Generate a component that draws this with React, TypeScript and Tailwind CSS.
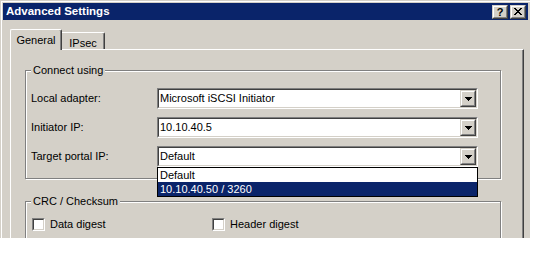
import React from "react";

const raised =
  "border border-t-[#d4d0c8] border-l-[#d4d0c8] border-r-[#404040] border-b-[#404040]";
const raisedInner =
  "border border-t-white border-l-white border-r-[#808080] border-b-[#808080]";
const sunken =
  "border border-t-[#808080] border-l-[#808080] border-r-white border-b-white";
const sunkenInner =
  "border border-t-[#404040] border-l-[#404040] border-r-[#d4d0c8] border-b-[#d4d0c8]";

const CaptionButton = ({ children }: { children: React.ReactNode }) => (
  <div className={`w-[16px] h-[14px] bg-[#d4d0c8] ${raised}`}>
    <div className={`w-full h-full flex items-center justify-center ${raisedInner}`}>
      {children}
    </div>
  </div>
);

const ArrowButton = () => (
  <div className={`w-[16px] h-full bg-[#d4d0c8] ${raised}`}>
    <div className={`w-full h-full flex items-center justify-center ${raisedInner}`}>
      <svg width="7" height="4" viewBox="0 0 7 4" shapeRendering="crispEdges">
        <rect x="0" y="0" width="7" height="1" fill="#000" />
        <rect x="1" y="1" width="5" height="1" fill="#000" />
        <rect x="2" y="2" width="3" height="1" fill="#000" />
        <rect x="3" y="3" width="1" height="1" fill="#000" />
      </svg>
    </div>
  </div>
);

const Combo = ({ value }: { value: string }) => (
  <div className={`w-[321px] h-[21px] ${sunken}`}>
    <div className={`h-full flex bg-white ${sunkenInner}`}>
      <div className="flex-1 pl-px leading-[17px] text-black">{value}</div>
      <ArrowButton />
    </div>
  </div>
);

const Row = ({ label, children }: { label: string; children: React.ReactNode }) => (
  <div className="flex items-center h-[21px]">
    <div className="w-[126px]">{label}</div>
    {children}
  </div>
);

const CheckBox = ({ label, className = "" }: { label: string; className?: string }) => (
  <div className={`flex items-center gap-[5px] ${className}`}>
    <div className={`w-[13px] h-[13px] ${sunken}`}>
      <div className={`w-full h-full bg-white ${sunkenInner}`} />
    </div>
    <span>{label}</span>
  </div>
);

const GroupBox = ({
  title,
  className = "",
  children,
}: {
  title: string;
  className?: string;
  children?: React.ReactNode;
}) => (
  <div
    className={`relative w-[476px] border border-[#808080] shadow-[1px_1px_0_white,inset_1px_1px_0_white] ${className}`}
  >
    <span className="absolute -top-[7px] left-[5px] px-[2px] bg-[#d4d0c8] leading-[13px]">
      {title}
    </span>
    {children}
  </div>
);

export default function App() {
  return (
    <div className="w-[537px] h-[255px] bg-white font-['Liberation_Sans',Arial,sans-serif] text-[11px] leading-[13px] text-black">
      <div className="w-[530px] h-[238px] overflow-hidden bg-[#d4d0c8] pt-px pl-px">
        <div className="h-full border-l border-t border-white pt-px pl-px">
          {/* title bar */}
          <div className="w-[525px] h-[17px] bg-[#0a246a] flex items-center justify-between pl-[3px] pr-[2px]">
            <span className="text-white font-bold text-[11.5px]">Advanced Settings</span>
            <div className="flex gap-[2px]">
              <CaptionButton>
                <span className="font-bold text-[11px] leading-[10px] text-black">?</span>
              </CaptionButton>
              <CaptionButton>
                <svg width="8" height="7" viewBox="0 0 8 7" shapeRendering="crispEdges">
                  <path
                    d="M0 0h2v1h1v1h2V1h1V0h2v1H7v1H6v1H5v1h1v1h1v1h1v1H6V6H5V5H3v1H2v1H0V6h1V5h1V4h1V3H2V2H1V1H0z"
                    fill="#000"
                  />
                </svg>
              </CaptionButton>
            </div>
          </div>

          <div className="pl-[7px]">
            {/* tabs */}
            <div className="flex items-end h-[20px] mt-[9px]">
              <div className="relative z-10 -mb-px w-[52px] h-[21px] bg-[#d4d0c8] border-l border-t border-white border-r border-r-[#404040] rounded-tl-[2px] rounded-tr-[2px] shadow-[inset_-1px_0_0_#808080] pt-[4px] text-center">
                General
              </div>
              <div className="w-[43px] h-[17px] border-t border-white border-r border-r-[#404040] rounded-tr-[2px] shadow-[inset_-1px_0_0_#808080] pt-[4px] text-center">
                IPsec
              </div>
            </div>

            {/* panel */}
            <div className="w-[514px] h-[200px] border-l border-t border-white border-r border-r-[#404040] shadow-[inset_-1px_0_0_#808080] pl-[14px] pt-[20px]">
              <GroupBox title="Connect using" className="h-[109px] pl-[5px] pt-[17px]">
                <div className="flex flex-col gap-[8px]">
                  <Row label="Local adapter:">
                    <Combo value="Microsoft iSCSI Initiator" />
                  </Row>
                  <Row label="Initiator IP:">
                    <Combo value="10.10.40.5" />
                  </Row>
                  <Row label="Target portal IP:">
                    <div className="relative">
                      <Combo value="Default" />
                      <div className="absolute z-20 top-full left-0 w-[321px] border border-black bg-white">
                        <div className="h-[14px] pl-[2px] leading-[14px]">Default</div>
                        <div className="h-[14px] pl-[2px] leading-[14px] bg-[#0a246a] text-white">
                          10.10.40.50 / 3260
                        </div>
                      </div>
                    </div>
                  </Row>
                </div>
              </GroupBox>

              <GroupBox title="CRC / Checksum" className="mt-[22px] h-[60px] pl-[6px] pt-[16px]">
                <div className="flex">
                  <CheckBox label="Data digest" className="w-[180px]" />
                  <CheckBox label="Header digest" />
                </div>
              </GroupBox>
            </div>
          </div>
        </div>
      </div>
    </div>
  );
}
